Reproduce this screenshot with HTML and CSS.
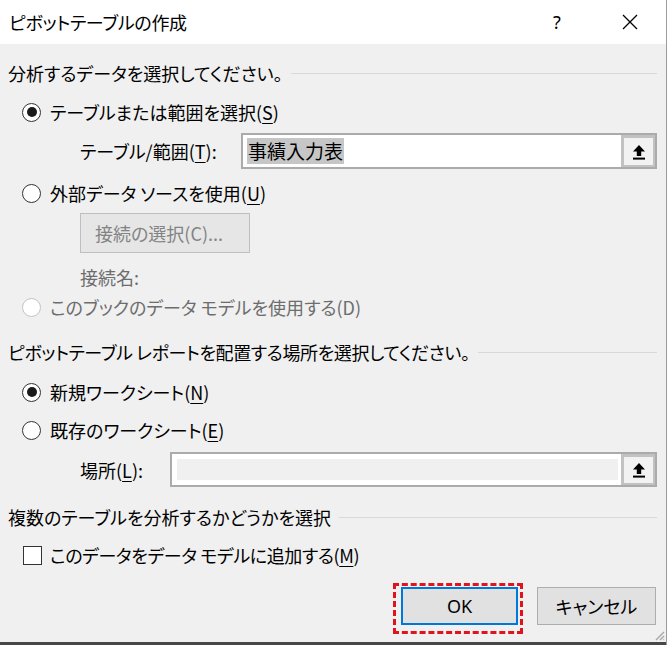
FILE: index.html
```html
<!DOCTYPE html>
<html lang="ja">
<head>
<meta charset="utf-8">
<title>ピボットテーブルの作成</title>
<link rel="stylesheet" href="styles.css">
</head>
<body>
<div class="dialog">
  <div class="titlebar">
    <span class="title">ピボットテーブルの作成</span>
    <span class="help">?</span>
    <span class="close">
      <svg width="16" height="16" viewBox="0 0 16 16"><path d="M1 1 L15 15 M15 1 L1 15" stroke="#000" stroke-width="1.3" fill="none"/></svg>
    </span>
  </div>
  <div class="body">
    <div class="section-head mt16"><span>分析するデータを選択してください。</span><span class="rule"></span></div>
    <div class="opt mt13"><span class="radio checked"></span><span>テーブルまたは範囲を選択(<u>S</u>)</span></div>
    <div class="field mt8">
      <label class="field-label w161">テーブル/範囲(<u>T</u>):</label>
      <div class="refbox">
        <div class="refinput"><span class="sel">事績入力表</span></div>
        <div class="refbtn"><svg width="14" height="16" viewBox="0 0 14 16"><path d="M7 1 L13 7.5 H9.2 V12 H4.8 V7.5 H1 Z" fill="#000"/><rect x="1" y="13.6" width="12" height="2" fill="#000"/></svg></div>
      </div>
    </div>
    <div class="opt mt11"><span class="radio"></span><span>外部データ ソースを使用(<u>U</u>)</span></div>
    <div class="indent mt7"><span class="btn-disabled">接続の選択(C)...</span></div>
    <div class="indent text-muted line mt11">接続名:</div>
    <div class="opt mt4 disabled"><span class="radio radio-disabled"></span><span>このブックのデータ モデルを使用する(D)</span></div>

    <div class="section-head mt19"><span class="tight">ピボットテーブル レポートを配置する場所を選択してください。</span><span class="rule"></span></div>
    <div class="opt mt14"><span class="radio checked"></span><span>新規ワークシート(<u>N</u>)</span></div>
    <div class="opt mt12"><span class="radio"></span><span>既存のワークシート(<u>E</u>)</span></div>
    <div class="field field-sm mt9">
      <label class="field-label w90">場所(<u>L</u>):</label>
      <div class="refbox">
        <div class="refinput refinput-disabled"></div>
        <div class="refbtn"><svg width="14" height="16" viewBox="0 0 14 16"><path d="M7 1 L13 7.5 H9.2 V12 H4.8 V7.5 H1 Z" fill="#000"/><rect x="1" y="13.6" width="12" height="2" fill="#000"/></svg></div>
      </div>
    </div>

    <div class="section-head mt17"><span>複数のテーブルを分析するかどうかを選択</span><span class="rule"></span></div>
    <div class="opt opt-check mt12"><span class="checkbox"></span><span class="tight">このデータをデータ モデルに追加する(<u>M</u>)</span></div>

    <div class="footer mt19">
      <span class="btn-wrap"><span class="btn btn-default">OK</span><span class="mark"></span></span>
      <span class="btn">キャンセル</span>
    </div>
    <svg class="grip" width="11" height="11" viewBox="0 0 11 11"><path d="M10 2 L2 10 M10 6 L6 10 M10 9.5 L9.5 10" stroke="#a8a8a8" stroke-width="1.4"/></svg>
  </div>
  <div class="strip"></div>
</div>
</body>
</html>
```

FILE: styles.css
```css
html, body {
  margin: 0;
  padding: 0;
  background: #ffffff;
}

body {
  font-family: "Noto Sans CJK JP", "Noto Sans", sans-serif;
  font-feature-settings: "palt";
  font-size: 18px;
  color: #000;
  line-height: 26px;
}

.dialog {
  width: 666px;
  height: 645px;
  display: flex;
  flex-direction: column;
  border-right: 1px solid #9c9c9c;
  background: #f0f0f0;
}

.titlebar {
  height: 44px;
  flex: none;
  background: #fff;
  display: flex;
  align-items: center;
  padding-left: 9px;
  box-sizing: border-box;
}

.title {
  font-size: 18px;
  letter-spacing: -0.3px;
}

.help {
  margin-left: auto;
  width: 16px;
  font-size: 18px;
  font-family: "Noto Sans", sans-serif;
  text-align: center;
}

.close {
  display: flex;
  margin-left: 57px;
  margin-right: 28px;
}

.body {
  flex: 1;
  position: relative;
  display: flex;
  flex-direction: column;
  padding: 0 9px 0 8px;
}

.tight {
  letter-spacing: -0.4px;
}

.mt4 { margin-top: 4px; }
.mt7 { margin-top: 7px; }
.mt8 { margin-top: 8px; }
.mt9 { margin-top: 9px; }
.mt11 { margin-top: 11px; }
.mt12 { margin-top: 12px; }
.mt13 { margin-top: 13px; }
.mt14 { margin-top: 14px; }
.mt16 { margin-top: 16px; }
.mt17 { margin-top: 17px; }
.mt19 { margin-top: 19px; }

.section-head {
  height: 26px;
  display: flex;
  align-items: center;
  white-space: nowrap;
}

.rule {
  flex: 1;
  height: 1px;
  background: #d9d9d9;
  margin-left: 8px;
}

.opt {
  height: 26px;
  display: flex;
  align-items: center;
  padding-left: 14px;
  white-space: nowrap;
}

.opt-check {
  padding-left: 15px;
}

.radio {
  width: 19px;
  height: 19px;
  box-sizing: border-box;
  border: 1.5px solid #333;
  border-radius: 50%;
  background: #fff;
  margin-right: 9px;
  display: flex;
  align-items: center;
  justify-content: center;
  flex: none;
}

.radio.checked::after {
  content: "";
  width: 10px;
  height: 10px;
  border-radius: 50%;
  background: #1a1a1a;
}

.radio-disabled {
  border-color: #c4c4c4;
}

.checkbox {
  width: 19px;
  height: 19px;
  box-sizing: border-box;
  border: 1.5px solid #333;
  background: #fff;
  margin-right: 8px;
  flex: none;
}

.disabled,
.text-muted {
  color: #6d6d6d;
}

u {
  text-decoration-thickness: 1px;
  text-underline-offset: 3px;
}

.field {
  height: 36px;
  display: flex;
  align-items: center;
}

.field-sm {
  height: 35px;
}

.field-label {
  margin-left: 72px;
  flex: none;
  white-space: nowrap;
}

.w161 { width: 161px; }
.w90 { width: 90px; }

.refbox {
  flex: 1;
  height: 100%;
  box-sizing: border-box;
  border: 2px solid #ababab;
  display: flex;
  background: #fff;
}

.refinput {
  flex: 1;
  display: flex;
  align-items: center;
  padding-left: 4px;
}

.refinput-disabled {
  margin: 2px 0 2px 2px;
  border: 3px solid #fff;
  background: #f0f0f0;
  padding: 0;
}

.sel {
  background: #c6c6c6;
  font-size: 19px;
  line-height: 26px;
  padding: 0 1px;
}

.refbtn {
  width: 34px;
  flex: none;
  box-sizing: border-box;
  border: 3px solid #c2c2c2;
  border-right-width: 2px;
  border-bottom-width: 2px;
  background: #f2f2f2;
  display: flex;
  align-items: center;
  justify-content: center;
}

.indent {
  padding-left: 72px;
  display: flex;
}

.line {
  height: 26px;
  align-items: center;
}

.btn-disabled {
  width: 170px;
  height: 40px;
  box-sizing: border-box;
  border: 1px solid #bfbfbf;
  background: #e6e6e6;
  color: #838383;
  display: flex;
  align-items: center;
  padding-left: 14px;
}

.footer {
  display: flex;
  justify-content: flex-end;
  gap: 19px;
  padding-right: 1px;
}

.btn-wrap {
  position: relative;
  display: flex;
}

.btn {
  width: 119px;
  height: 38px;
  box-sizing: border-box;
  border: 1px solid #adadad;
  background: #e1e1e1;
  display: flex;
  align-items: center;
  justify-content: center;
}

.btn-default {
  width: 117px;
  border: 2px solid #0078d7;
  font-family: "Noto Sans", sans-serif;
}

.mark {
  position: absolute;
  left: -8px;
  right: -5px;
  top: -4px;
  bottom: -9px;
  border: 3px dashed #e0141e;
}

.grip {
  position: absolute;
  right: 1px;
  bottom: 1px;
}

.strip {
  height: 3px;
  flex: none;
  background: #474747;
}
```
